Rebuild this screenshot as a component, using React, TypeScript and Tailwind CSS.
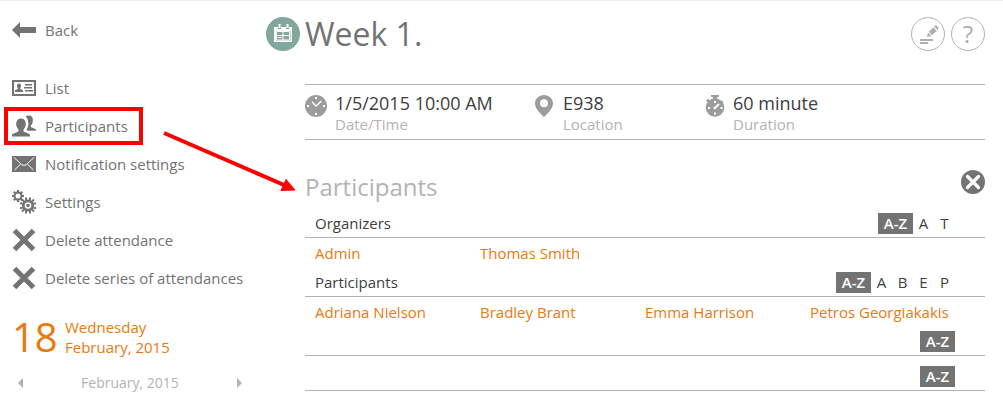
import React from 'react';

type IconProps = { className?: string };

const BackIcon: React.FC<IconProps> = ({ className }) => (
  <svg viewBox="0 0 24 16" className={className} fill="currentColor" aria-hidden="true">
    <path d="M0 8L8 0V5H24V11H8V16Z" />
  </svg>
);

const ListIcon: React.FC<IconProps> = ({ className }) => (
  <svg viewBox="0 0 24 16" className={className} fill="currentColor" aria-hidden="true">
    <path fillRule="evenodd" d="M0 0H24V16H0ZM2 2V14H22V2Z" />
    <path d="M7 3.5C8.400 3.500 9 4.500 9 5.700C9 6.800 8.600 7.600 8.200 8.200V9L11 10.300V12H3V10.300L5.800 9V8.200C5.400 7.600 5 6.800 5 5.700C5 4.500 5.600 3.500 7 3.500Z" />
    <path d="M13 4H20V5.500H13ZM12 7H20V8.500H12ZM13 10H21V11.500H13Z" />
  </svg>
);

const PeopleIcon: React.FC<IconProps> = ({ className }) => (
  <svg viewBox="0 0 24 22" className={className} fill="currentColor" aria-hidden="true">
    <path d="M9 3.500C12 3.500 13.800 5.500 13.700 8.500C13.900 9.400 14 10.300 13.400 11.200C13.100 12.600 12.400 13.600 11.500 14.500V16.500L17.500 19C18 19.300 18 20 18 21.500H0C0 20 0 19.300 .500 19L6.500 16.500V14.500C5.600 13.600 4.900 12.600 4.600 11.200C4 10.300 4.100 9.400 4.300 8.500C4.200 5.500 6 3.500 9 3.500Z" />
    <path d="M13.500 1.500C15 .200 18.200 .200 19.800 1.800C21 3 20.900 4.700 20.700 6C21 7 20.700 7.800 20.200 8.200C19.900 9.300 19.300 10.200 18.800 10.700V12L23.300 14C24 14.400 24 15 24 15.800H16.300L14.300 14.900C15.300 13.700 15.800 12.400 15.900 11.400C16.500 10 16.600 8.500 16.200 7.300C16 4.500 15.200 2.700 13.500 1.500Z" />
  </svg>
);

const MailIcon: React.FC<IconProps> = ({ className }) => (
  <svg viewBox="0 0 24 16" className={className} aria-hidden="true">
    <path d="M0 0H24V16H0Z" fill="currentColor" />
    <path d="M2 1.500L9.500 8.500Q12 10.500 14.500 8.500L22 1.500M2.500 14L8.500 8.200M21.500 14L15.500 8.200" fill="none" stroke="#fff" strokeWidth="1" />
  </svg>
);

const GearsIcon: React.FC<IconProps> = ({ className }) => (
  <svg viewBox="0 0 24 24" className={className} fill="none" stroke="currentColor" aria-hidden="true">
    <circle cx="6" cy="6" r="3.500" strokeWidth="2" />
    <path d="M6 0V2M6 10V12M0 6H2M10 6H12M1.800 1.800L3.200 3.200M8.800 8.800L10.200 10.200M10.200 1.800L8.800 3.200M1.800 10.200L3.200 8.800" strokeWidth="2.200" />
    <circle cx="16" cy="15.500" r="4.700" strokeWidth="2.800" />
    <circle cx="16" cy="15.500" r="1.800" fill="currentColor" stroke="none" />
    <path d="M14 7.500V10M18 7.500V10M14 21V23.500M18 21V23.500M8 13.500H10.500M8 18H10.500M21.500 13.500H24M21.500 18H24M10 9.500L12 11.500M22 9.500L20 11.500M10 21.500L12 19.500M22 21.500L20 19.500" strokeWidth="2" />
  </svg>
);

const CrossIcon: React.FC<IconProps> = ({ className }) => (
  <svg viewBox="0 0 24 24" className={className} aria-hidden="true">
    <path d="M2.500 2.500L21.500 21.500M21.500 2.500L2.500 21.500" stroke="currentColor" strokeWidth="5" />
  </svg>
);

const CalendarIcon: React.FC<IconProps> = ({ className }) => (
  <svg viewBox="0 0 34 34" className={className} aria-hidden="true">
    <circle cx="17" cy="17" r="17" fill="#82a79c" />
    <path fill="#fff" fillRule="evenodd" d="M8 10H12V12H15V10H20V12H23V10H26V25H8ZM10 14V23.500H24.500V14Z" />
    <path d="M12.500 7H14.500V11H12.500ZM20.500 7H22.500V11H20.500Z" fill="#fff" />
    <path d="M10.500 14.500H23.500V23H10.500ZM10.500 18.500H23.500M17 14.500V23" fill="none" stroke="#fff" strokeWidth="1" />
    <path d="M12 20.500H15.500" stroke="#fff" strokeWidth="1" />
  </svg>
);

const ClockIcon: React.FC<IconProps> = ({ className }) => (
  <svg viewBox="0 0 22 22" className={className} aria-hidden="true">
    <circle cx="11" cy="11" r="11" fill="#9c9c9c" />
    <path d="M7 7L11 11L16.500 6" fill="none" stroke="#fff" strokeWidth="1.300" />
    <path d="M10 2H12V4H10ZM10 18H12V20H10ZM2 10H4V12H2ZM18 10H20V12H18Z" fill="#fff" />
  </svg>
);

const PinIcon: React.FC<IconProps> = ({ className }) => (
  <svg viewBox="0 0 18 22" className={className} aria-hidden="true">
    <path fill="#9c9c9c" fillRule="evenodd" d="M9 0C14 0 18 3.700 18 8.500C18 13.500 13 18 9 22C5 18 0 13.500 0 8.500C0 3.700 4 0 9 0ZM9 4.300A4 4 0 1 0 9 12.300A4 4 0 1 0 9 4.300Z" />
  </svg>
);

const StopwatchIcon: React.FC<IconProps> = ({ className }) => (
  <svg viewBox="0 0 20 22" className={className} aria-hidden="true">
    <circle cx="10" cy="12.500" r="9.300" fill="#9c9c9c" />
    <path d="M6 0H14V1.500L12 2.500V4H8V2.500L6 1.500ZM1 5.500L3 3.700L5.500 6L3.500 8ZM17 5.500L18.500 7.300L16.500 8.500L15 7Z" fill="#9c9c9c" />
    <path d="M10 13L14 9" stroke="#fff" strokeWidth="1.800" />
    <circle cx="9.800" cy="13" r="1.300" fill="#fff" />
    <path d="M9 6H11V8H9ZM9 17.500H11V19.500H9ZM3 12H5V14H3ZM15.500 12H17.500V14H15.500Z" fill="#fff" />
  </svg>
);

const EditIcon: React.FC<IconProps> = ({ className }) => (
  <svg viewBox="0 0 32 32" className={className} aria-hidden="true">
    <path d="M8 21H21V23H8ZM8 24H16V26H8Z" fill="#b0b0b0" />
    <path d="M15 19L16 14.600L19.400 18ZM16.800 13.800L21.300 9.300L24.700 12.700L20.200 17.200ZM22 8.600L23.200 7.600Q24 7 24.800 7.700L26.300 9.200Q27 10 26.300 10.900L25.400 12Z" fill="#b0b0b0" />
  </svg>
);

const menu = [
  { label: 'List', icon: <ListIcon className="h-4 w-6" /> },
  { label: 'Participants', icon: <PeopleIcon className="h-[22px] w-6" />, marked: true },
  { label: 'Notification settings', icon: <MailIcon className="h-4 w-6" /> },
  { label: 'Settings', icon: <GearsIcon className="size-6" /> },
  { label: 'Delete attendance', icon: <CrossIcon className="size-6" /> },
  { label: 'Delete series of attendances', icon: <CrossIcon className="size-6" /> },
];

const details = [
  { value: '1/5/2015 10:00 AM', label: 'Date/Time', icon: <ClockIcon className="mr-2 h-[22px] w-[22px]" /> },
  { value: 'E938', label: 'Location', icon: <PinIcon className="mr-[10px] h-[22px] w-[18px]" /> },
  { value: '60 minute', label: 'Duration', icon: <StopwatchIcon className="mr-2 h-[22px] w-5" /> },
];

const groups = [
  { title: 'Organizers', letters: ['A', 'T'], people: ['Admin', 'Thomas Smith'] },
  {
    title: 'Participants',
    letters: ['A', 'B', 'E', 'P'],
    people: ['Adriana Nielson', 'Bradley Brant', 'Emma Harrison', 'Petros Georgiakakis'],
  },
  { title: '', letters: [], people: [] },
  { title: '', letters: [], people: [] },
];

// Red frame and arrow pointing from the menu item to its panel
const Callout: React.FC = () => (
  <>
    <span className="pointer-events-none absolute -left-2 top-0 h-[38px] w-[139px] border-4 border-[#ff0000]" />
    <svg viewBox="0 0 134 62" className="pointer-events-none absolute left-[151px] top-6 z-10 h-[62px] w-[134px]" aria-hidden="true">
      <path d="M1 2L121 54" stroke="#ff0000" strokeWidth="4" />
      <path d="M132 59L118 59.500L123 48.500Z" fill="#ff0000" stroke="#ff0000" strokeWidth="1" />
    </svg>
  </>
);

const Sidebar: React.FC = () => (
  <aside className="w-[266px] shrink-0 pl-3 pt-[10px] text-[#737373]">
    <a href="#back" className="flex h-[38px] items-center gap-[9px]">
      <BackIcon className="h-4 w-6" />
      Back
    </a>

    <nav className="mt-5">
      {menu.map((item) => (
        <div key={item.label} className="relative">
          <a href="#menu" className="flex h-[38px] items-center gap-[9px] whitespace-nowrap">
            {item.icon}
            {item.label}
          </a>
          {item.marked && <Callout />}
        </div>
      ))}
    </nav>

    <div className="mt-5 flex h-10 items-center gap-2 text-[#e87b0e]">
      <span className="w-[45px] text-[40px] leading-10">18</span>
      <span className="leading-5">
        Wednesday
        <br />
        February, 2015
      </span>
    </div>

    <div className="mt-4 flex h-5 items-center justify-between pl-[6px] pr-6 text-[#b3b3b3]">
      <button type="button" aria-label="Previous month">
        <svg viewBox="0 0 5 10" className="h-[10px] w-[5px]" fill="currentColor">
          <path d="M5 0V10L0 5Z" />
        </svg>
      </button>
      <span className="text-sm">February, 2015</span>
      <button type="button" aria-label="Next month">
        <svg viewBox="0 0 5 10" className="h-[10px] w-[5px]" fill="currentColor">
          <path d="M0 0V10L5 5Z" />
        </svg>
      </button>
    </div>
  </aside>
);

const App: React.FC = () => {
  return (
    <div className="flex border-t border-[#ececec] bg-white font-['Open_Sans',sans-serif] text-[15px] leading-5">
      <Sidebar />

      <main className="min-w-0 flex-1 pr-[18px] pt-4">
        <header className="flex h-[34px] items-center">
          <CalendarIcon className="mr-[5px] size-[34px]" />
          <h1 className="flex-1 text-[32px] font-medium leading-[34px] text-[#737373]">Week 1.</h1>
          <div className="flex gap-[6px]">
            <button type="button" aria-label="Edit" className="size-[34px] rounded-full border border-[#b3b3b3]">
              <EditIcon className="size-8" />
            </button>
            <button type="button" aria-label="Help" className="size-[34px] rounded-full border border-[#b3b3b3] text-2xl leading-8 text-[#b0b0b0]">
              ?
            </button>
          </div>
        </header>

        <div className="ml-[39px]">
          <section className="mt-[33px] grid grid-cols-[230px_170px_1fr] border-y border-[#b3b3b3] pb-[5px] pt-[7px]">
            {details.map((item) => (
              <div key={item.label} className="flex">
                <span className="mt-[3px]">{item.icon}</span>
                <div>
                  <div className="text-lg leading-[22px] text-[#3d3d3d]">{item.value}</div>
                  <div className="text-[15px] leading-5 text-[#b3b3b3]">{item.label}</div>
                </div>
              </div>
            ))}
          </section>

          <section>
            <div className="flex h-[73px] items-start justify-between pt-[30px]">
              <h2 className="text-2xl leading-[34px] text-[#b3b3b3]">Participants</h2>
              <button type="button" aria-label="Close">
                <svg viewBox="0 0 24 24" className="size-6">
                  <circle cx="12" cy="12" r="12" fill="#737373" />
                  <path d="M6.500 6.500L17.500 17.500M17.500 6.500L6.500 17.500" stroke="#fff" strokeWidth="3.200" strokeLinecap="round" />
                </svg>
              </button>
            </div>

            {groups.map((group, i) => (
              <div key={i}>
                <div className="flex h-[25px] justify-between border-b border-[#b3b3b3] pl-[10px] pr-[30px] text-[#3d3d3d]">
                  <h3 className="leading-[21px]">{group.title}</h3>
                  <div className="flex h-[21px] leading-[21px]">
                    <button type="button" className="w-[35px] bg-[#737373] font-semibold text-white">A-Z</button>
                    {group.letters.map((letter) => (
                      <button key={letter} type="button" className="w-[21px]">{letter}</button>
                    ))}
                  </div>
                </div>
                {group.people.length > 0 ? (
                  <div className="grid h-[34px] grid-cols-4 px-[10px] leading-[30px] text-[#e87b0e]">
                    {group.people.map((name) => (
                      <a key={name} href="#person" className="whitespace-nowrap">{name}</a>
                    ))}
                  </div>
                ) : (
                  <div className="h-[10px]" />
                )}
              </div>
            ))}
          </section>
        </div>
      </main>
    </div>
  );
};

export default App;
